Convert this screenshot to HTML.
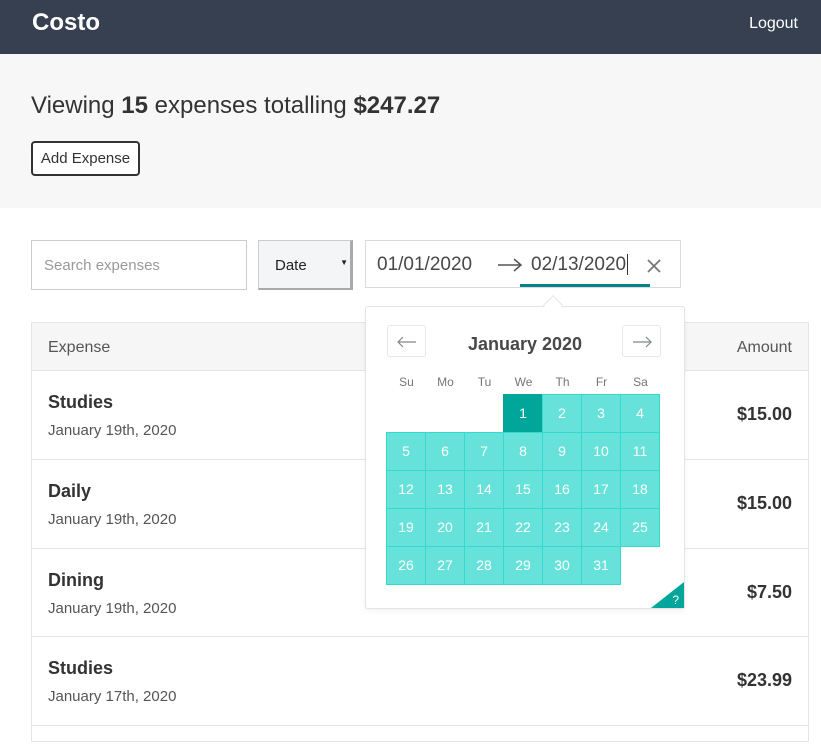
<!DOCTYPE html><html><head><style>
*{box-sizing:border-box;margin:0;padding:0}
body{width:821px;height:733px;overflow:hidden;font-family:"Liberation Sans",sans-serif;color:#333;background:#fff;position:relative}
.top{height:54px;background:#364051;color:#fff;position:relative}
.top b{position:absolute;left:32px;top:9px;font-size:24px}
.top span{position:absolute;right:23px;top:15px;font-size:16px}
.sum{height:154px;background:#f7f7f7;position:relative}
.sum h1{position:absolute;left:31px;top:38px;font-size:24px;font-weight:normal}
.btn{position:absolute;left:31px;top:87px;width:109px;height:35px;border:2px solid #333;border-radius:4px;font-size:15px;line-height:31px;text-align:center;background:#fff}
.abs{position:absolute}
.tbl{left:31px;top:322px;width:778px;height:420px;border:1px solid #e5e5e5}
.row{position:absolute;left:0;width:776px;border-top:1px solid #e5e5e5}
.row b{position:absolute;left:16px;top:21px;font-size:18px}
.row i{position:absolute;left:16px;top:51px;font-style:normal;font-size:15px;color:#555}
.row em{position:absolute;right:16px;top:33px;font-style:normal;font-weight:bold;font-size:18px}
.cal{left:365px;top:306px;width:320px;height:303px;background:#fff;border:1px solid #e4e4e4;border-radius:3px;box-shadow:0 2px 6px rgba(0,0,0,.05)}
.c{position:absolute;width:40px;height:39px;border:1px solid #33dacd;background:#66e2da;color:#fff;font-size:14px;text-align:center;line-height:37px}
.dw{position:absolute;top:68px;font-size:12px;color:#757575;width:39px;text-align:center}
.nav{position:absolute;top:18px;width:39px;height:32px;border:1px solid #e4e7e7;border-radius:3px}
</style></head><body>
<div class="top"><b>Costo</b><span>Logout</span></div>
<div class="sum"><h1>Viewing <b>15</b> expenses totalling <b>$247.27</b></h1><div class="btn">Add Expense</div></div>
<div class="abs" style="left:31px;top:240px;width:216px;height:50px;border:1px solid #ccc;font-size:15px;color:#999;padding:16px 12px">Search expenses</div>
<div class="abs" style="left:258px;top:240px;width:95px;height:50px;border:1px solid #ccc;border-right:3px solid #aaa;border-bottom:2px solid #aaa;background:#f4f5f7;font-size:15px;color:#222;padding:16px 16px">Date<span style="position:absolute;right:2px;top:17px;font-size:8px">▼</span></div>
<div class="abs" style="left:365px;top:240px;width:316px;height:48px;border:1px solid #dbdbdb;font-size:19px;color:#484848">
<span class="abs" style="left:11px;top:13px">01/01/2020</span>
<svg class="abs" style="left:131px;top:16px" width="26" height="16" viewBox="0 0 26 16"><path d="M1 8H24M17 2L24 8L17 14" fill="none" stroke="#555" stroke-width="1.5"/></svg>
<span class="abs" style="left:165px;top:13px">02/13/2020<span style="border-left:1px solid #333;margin-left:1px"></span></span>
<svg class="abs" style="left:281px;top:18px" width="14" height="14" viewBox="0 0 14 14"><path d="M1 1L13 13M13 1L1 13" stroke="#777" stroke-width="1.8"/></svg>
<div class="abs" style="left:154px;top:43px;width:130px;height:3px;background:#008489"></div>
</div>
<div class="abs tbl">
<div class="abs" style="left:0;top:0;width:776px;height:48px;background:#f6f6f6;font-size:16px;color:#555"><span class="abs" style="left:16px;top:16px">Expense</span><span class="abs" style="right:16px;top:16px">Amount</span></div>
<div class="row" style="top:47px;height:89px"><b>Studies</b><i>January 19th, 2020</i><em>$15.00</em></div>
<div class="row" style="top:136px;height:89px"><b>Daily</b><i>January 19th, 2020</i><em>$15.00</em></div>
<div class="row" style="top:225px;height:88px"><b>Dining</b><i>January 19th, 2020</i><em>$7.50</em></div>
<div class="row" style="top:313px;height:89px"><b>Studies</b><i>January 17th, 2020</i><em>$23.99</em></div>
<div class="row" style="top:402px;height:20px"></div>
</div>
<div class="abs" style="left:546px;top:298px;width:14px;height:14px;background:#fff;border-left:1px solid #e4e4e4;border-top:1px solid #e4e4e4;transform:rotate(45deg);z-index:3"></div>
<div class="abs cal">
<div class="nav" style="left:21px"><svg style="position:absolute;left:9px;top:10px" width="20" height="12" viewBox="0 0 20 12"><path d="M19 6H1M6 1L1 6L6 11" fill="none" stroke="#82888a" stroke-width="1.2"/></svg></div>
<div class="nav" style="left:256px"><svg style="position:absolute;left:9px;top:10px" width="20" height="12" viewBox="0 0 20 12"><path d="M1 6H19M14 1L19 6L14 11" fill="none" stroke="#82888a" stroke-width="1.2"/></svg></div>
<div class="abs" style="left:0;width:318px;top:27px;text-align:center;font-size:18px;font-weight:bold;color:#484848">January 2020</div>
<div class="dw" style="left:21px">Su</div><div class="dw" style="left:60px">Mo</div><div class="dw" style="left:99px">Tu</div><div class="dw" style="left:138px">We</div><div class="dw" style="left:177px">Th</div><div class="dw" style="left:216px">Fr</div><div class="dw" style="left:255px">Sa</div>
<div id="g"></div>
<div class="abs" style="right:0;bottom:0;width:0;height:0;border-left:33px solid transparent;border-bottom:26px solid #00a699"></div>
<span class="abs" style="right:5px;bottom:1px;color:#fff;font-size:12px">?</span>
</div>
<script>
var g=document.getElementById('g'),h='';
for(var d=1;d<=31;d++){var i=d+2,col=i%7,r=Math.floor(i/7);
h+='<div class="c" style="left:'+(20+col*39)+'px;top:'+(87+r*38)+'px;'+(d==1?'background:#00a699;border-color:#00a699':'')+'">'+d+'</div>';}
g.innerHTML=h;
</script>
</body></html>
